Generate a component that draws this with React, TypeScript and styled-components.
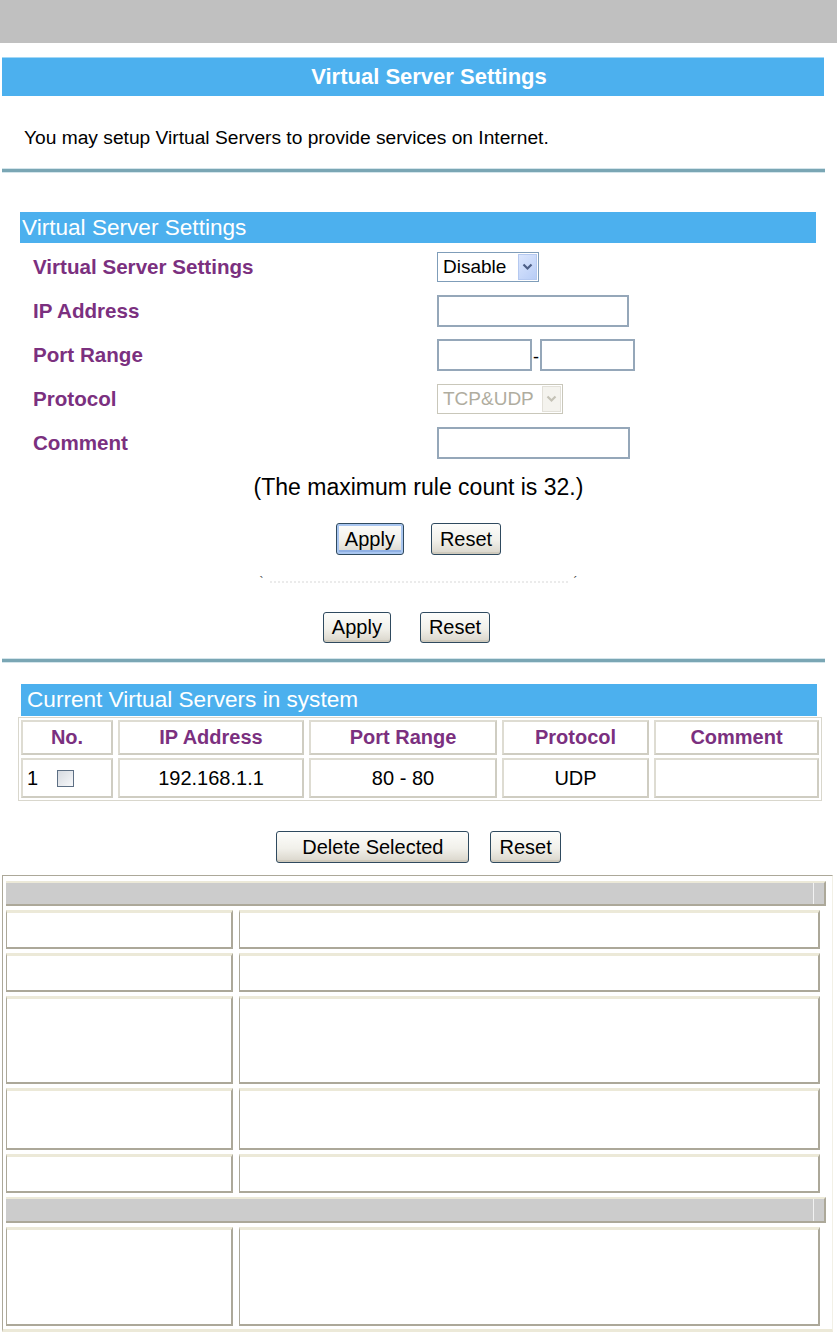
import React from "react";
import styled, { createGlobalStyle } from "styled-components";

const GlobalStyle = createGlobalStyle`
  html, body {
    margin: 0;
    padding: 0;
    background: #fff;
  }
  body {
    font-family: "Liberation Sans", Arial, sans-serif;
    color: #000;
  }
`;

const Page = styled.div`
  width: 837px;
  height: 1332px;
  overflow: hidden;
  display: flex;
  flex-direction: column;
`;

const TopBar = styled.div`
  height: 43px;
  background: #c0c0c0;
`;

const TitleBar = styled.div`
  margin: 14px 13px 0 2px;
  height: 39px;
  box-sizing: border-box;
  background: #4cb0ee;
  border-top: 1px solid #a3d8f6;
  color: #fff;
  font-weight: bold;
  font-size: 22px;
  display: flex;
  align-items: center;
  justify-content: center;
  padding-left: 32px;
`;

const Intro = styled.p`
  margin: 30px 0 0 24px;
  font-size: 19.2px;
  line-height: 24px;
`;

const Rule = styled.div<{ $top: number }>`
  margin: ${(p) => p.$top}px 12px 0 2px;
  height: 3px;
  background: #7aa6b4;
  box-shadow: 0 -1px 0 #d4e5eb, 0 1px 0 #d4e5eb;
`;

const BlueHeader = styled.div<{ $top: number; $left: number; $right: number; $h: number; $pad: number }>`
  margin: ${(p) => p.$top}px ${(p) => p.$right}px 0 ${(p) => p.$left}px;
  height: ${(p) => p.$h}px;
  background: #4cb0ee;
  color: #fff;
  font-size: 22.6px;
  display: flex;
  align-items: center;
  padding-left: ${(p) => p.$pad}px;
`;

const Form = styled.div`
  margin-top: 2px;
  display: flex;
  flex-direction: column;
`;

const FormRow = styled.div`
  height: 44px;
  display: grid;
  grid-template-columns: 437px 1fr;
  align-items: center;
`;

const Label = styled.div`
  padding-left: 33px;
  color: #7b307f;
  font-weight: bold;
  font-size: 20.6px;
`;

const Controls = styled.div`
  display: flex;
  align-items: center;
`;

const TextInput = styled.input<{ $w: number }>`
  width: ${(p) => p.$w}px;
  height: 32px;
  box-sizing: border-box;
  border: 2px solid #95a7b9;
  background: #fff;
  padding: 0 4px;
  font: 18px "Liberation Sans", Arial, sans-serif;
`;

const Dash = styled.span`
  width: 8px;
  text-align: center;
  font-size: 18px;
  line-height: 1;
  margin-top: 4px;
`;

const SelectBox = styled.div<{ $w: number; $disabled?: boolean }>`
  width: ${(p) => p.$w}px;
  height: 30px;
  box-sizing: border-box;
  border: 1px solid ${(p) => (p.$disabled ? "#c9c7ba" : "#7f9db9")};
  background: #fff;
  display: flex;
  align-items: center;
  justify-content: space-between;
  padding: 1px 1px 1px 5px;
  font-size: 19px;
  color: ${(p) => (p.$disabled ? "#b0ad9f" : "#000")};
`;

const ArrowBox = styled.div<{ $disabled?: boolean }>`
  width: 19px;
  height: 100%;
  box-sizing: border-box;
  display: flex;
  align-items: center;
  justify-content: center;
  border: 1px solid ${(p) => (p.$disabled ? "#e2e0d8" : "#b5c9f0")};
  background: ${(p) =>
    p.$disabled ? "#f4f3ee" : "linear-gradient(135deg, #dbe6fd, #b8cdf6)"};
`;

const Note = styled.div`
  margin-top: 9px;
  text-align: center;
  font-size: 23px;
  line-height: 26px;
`;

const ButtonRow = styled.div<{ $top: number; $gap: number; $shift?: number }>`
  margin-top: ${(p) => p.$top}px;
  display: flex;
  justify-content: center;
  gap: ${(p) => p.$gap}px;
  padding-right: ${(p) => p.$shift ?? 0}px;
`;

const Button = styled.button<{ $focused?: boolean; $pad?: number; $h?: number }>`
  height: ${(p) => p.$h ?? 32}px;
  padding: 0 ${(p) => p.$pad ?? 8}px;
  font: 20px "Liberation Sans", Arial, sans-serif;
  color: #000;
  background: linear-gradient(#fdfdfb, #f1f0ea 55%, #d9d5ca);
  border: 1px solid #2f4a5f;
  border-radius: 3px;
  box-shadow: ${(p) =>
    p.$focused
      ? "inset 0 0 0 2px #a9c6f0, inset 0 -3px 0 1px #8fb0e4"
      : "inset 0 -2px 0 #cfcabd"};
  cursor: pointer;
`;

const Faint = styled.div`
  margin: 19px auto 0;
  width: 318px;
  height: 16px;
  display: flex;
  align-items: center;
  justify-content: space-between;
  font-size: 12px;
  color: #444;
`;

const FaintFill = styled.span`
  flex: 1;
  margin: 0 6px;
  border-bottom: 2px dotted #ebebeb;
`;

const ServerTable = styled.div`
  margin: 1px 15px 0 18px;
  border: 1px solid #d9d7cd;
  padding: 2px;
  display: grid;
  grid-template-columns: 92px 186px 188px 147px 165px;
  grid-template-rows: 35px 40px;
  gap: 3px 5px;
`;

const Cell = styled.div<{ $head?: boolean; $left?: boolean }>`
  box-sizing: border-box;
  border: 2px solid #dedcd2;
  border-bottom-color: #cfcdc2;
  border-right-color: #cfcdc2;
  display: flex;
  align-items: center;
  justify-content: ${(p) => (p.$left ? "flex-start" : "center")};
  padding-left: ${(p) => (p.$left ? 4 : 0)}px;
  font-size: 20px;
  font-weight: ${(p) => (p.$head ? "bold" : "normal")};
  color: ${(p) => (p.$head ? "#7b307f" : "#000")};
`;

const CheckBox = styled.span`
  margin-left: 19px;
  width: 17px;
  height: 17px;
  box-sizing: border-box;
  border: 1px solid #5d6f84;
  background: linear-gradient(135deg, #d6dae0, #f7f8fa);
`;

const InfoTable = styled.div`
  margin: 12px 0 0 2px;
  width: 831px;
  flex: 1;
  box-sizing: border-box;
  border: 1px solid #aca899;
  border-right-color: #f2f0e6;
  border-bottom: 3px solid #ece9d8;
  padding: 5px 3px 0 3px;
  display: flex;
  flex-direction: column;
  gap: 4px;
`;

const GrayRow = styled.div<{ $h: number }>`
  position: relative;
  width: 820px;
  height: ${(p) => p.$h}px;
  box-sizing: border-box;
  background: #cccccc;
  border-top: 2px solid #ece9d8;
  border-bottom: 2px solid #aca899;
  border-right: 2px solid #aca899;
  &::after {
    content: "";
    position: absolute;
    right: 10px;
    top: 0;
    bottom: 0;
    width: 1px;
    background: #f2f2f2;
  }
`;

const InfoRow = styled.div<{ $h: number }>`
  height: ${(p) => p.$h}px;
  display: grid;
  grid-template-columns: 227px 581px;
  gap: 6px;
`;

const InfoCell = styled.div`
  box-sizing: border-box;
  background: #fff;
  border-top: 3px solid #ece9d8;
  border-left: 1px solid #aca899;
  border-right: 2px solid #aca899;
  border-bottom: 2px solid #aca899;
`;

const Chevron = ({ color }: { color: string }) => (
  <svg width="11" height="8" viewBox="0 0 11 8">
    <path d="M1.5 1.5 L5.5 5.5 L9.5 1.5" fill="none" stroke={color} strokeWidth="2.2" />
  </svg>
);

const servers = [{ no: 1, ip: "192.168.1.1", ports: "80 - 80", protocol: "UDP", comment: "" }];

const infoRows = [39, 39, 88, 62, 39];

export default function App() {
  return (
    <Page>
      <GlobalStyle />
      <TopBar />
      <TitleBar>Virtual Server Settings</TitleBar>
      <Intro>You may setup Virtual Servers to provide services on Internet.</Intro>
      <Rule $top={19} />

      <BlueHeader $top={40} $left={20} $right={21} $h={31} $pad={2}>
        Virtual Server Settings
      </BlueHeader>
      <Form>
        <FormRow>
          <Label>Virtual Server Settings</Label>
          <Controls>
            <SelectBox $w={102}>
              Disable
              <ArrowBox>
                <Chevron color="#4d5f86" />
              </ArrowBox>
            </SelectBox>
          </Controls>
        </FormRow>
        <FormRow>
          <Label>IP Address</Label>
          <Controls>
            <TextInput $w={192} />
          </Controls>
        </FormRow>
        <FormRow>
          <Label>Port Range</Label>
          <Controls>
            <TextInput $w={95} />
            <Dash>-</Dash>
            <TextInput $w={95} />
          </Controls>
        </FormRow>
        <FormRow>
          <Label>Protocol</Label>
          <Controls>
            <SelectBox $w={126} $disabled>
              TCP&amp;UDP
              <ArrowBox $disabled>
                <Chevron color="#c4c2b6" />
              </ArrowBox>
            </SelectBox>
          </Controls>
        </FormRow>
        <FormRow>
          <Label>Comment</Label>
          <Controls>
            <TextInput $w={193} />
          </Controls>
        </FormRow>
      </Form>
      <Note>(The maximum rule count is 32.)</Note>
      <ButtonRow $top={23} $gap={27}>
        <Button $focused>Apply</Button>
        <Button>Reset</Button>
      </ButtonRow>
      <Faint>
        <span>`</span>
        <FaintFill />
        <span>´</span>
      </Faint>
      <ButtonRow $top={22} $gap={29} $shift={24}>
        <Button $h={31}>Apply</Button>
        <Button $h={31}>Reset</Button>
      </ButtonRow>
      <Rule $top={16} />

      <BlueHeader $top={22} $left={21} $right={20} $h={32} $pad={6}>
        Current Virtual Servers in system
      </BlueHeader>
      <ServerTable>
        <Cell $head>No.</Cell>
        <Cell $head>IP Address</Cell>
        <Cell $head>Port Range</Cell>
        <Cell $head>Protocol</Cell>
        <Cell $head>Comment</Cell>
        {servers.map((s) => (
          <React.Fragment key={s.no}>
            <Cell $left>
              {s.no}
              <CheckBox />
            </Cell>
            <Cell>{s.ip}</Cell>
            <Cell>{s.ports}</Cell>
            <Cell>{s.protocol}</Cell>
            <Cell>{s.comment}</Cell>
          </React.Fragment>
        ))}
      </ServerTable>
      <ButtonRow $top={30} $gap={21}>
        <Button $pad={25}>Delete Selected</Button>
        <Button>Reset</Button>
      </ButtonRow>

      <InfoTable>
        <GrayRow $h={25} />
        {infoRows.map((h, i) => (
          <InfoRow key={i} $h={h}>
            <InfoCell />
            <InfoCell />
          </InfoRow>
        ))}
        <GrayRow $h={26} />
        <InfoRow $h={99}>
          <InfoCell />
          <InfoCell />
        </InfoRow>
      </InfoTable>
    </Page>
  );
}
